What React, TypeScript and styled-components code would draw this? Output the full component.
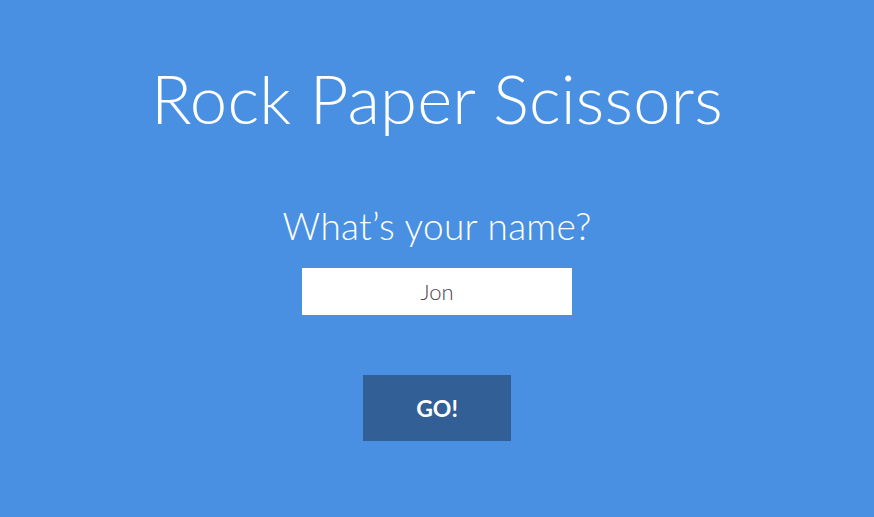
import React from "react";
import styled, { createGlobalStyle } from "styled-components";

const Global = createGlobalStyle`
  html, body { margin: 0; padding: 0; background: #4a90e2; }
  body { font-family: Lato, "Open Sans", sans-serif; }
`;

const Page = styled.main`
  width: 874px;
  height: 517px;
  background: #4a90e2;
  display: flex;
  flex-direction: column;
  align-items: center;
  color: #fff;
`;

const Title = styled.h1`
  margin: 56px 0 0;
  font-size: 67px;
  font-weight: 300;
  line-height: 84px;
  letter-spacing: 0.2px;
`;

const Prompt = styled.h2`
  margin: 64px 0 0;
  font-size: 37px;
  font-weight: 300;
  line-height: 44px;
  letter-spacing: 0.3px;
`;

const NameInput = styled.input`
  margin-top: 20px;
  width: 270px;
  height: 47px;
  box-sizing: border-box;
  border: none;
  outline: none;
  background: #fff;
  text-align: center;
  font-family: Lato, sans-serif;
  font-size: 22px;
  font-weight: 300;
  color: #4a4a4a;
`;

const GoButton = styled.button`
  margin-top: 60px;
  width: 148px;
  height: 66px;
  border: none;
  background: #325f95;
  color: #fff;
  font-family: Lato, sans-serif;
  font-size: 23px;
  font-weight: 700;
  cursor: pointer;
`;

export default function App() {
  return (
    <>
      <Global />
      <Page>
        <Title>Rock Paper Scissors</Title>
        <Prompt>What’s your name?</Prompt>
        <NameInput defaultValue="Jon" />
        <GoButton>GO!</GoButton>
      </Page>
    </>
  );
}
